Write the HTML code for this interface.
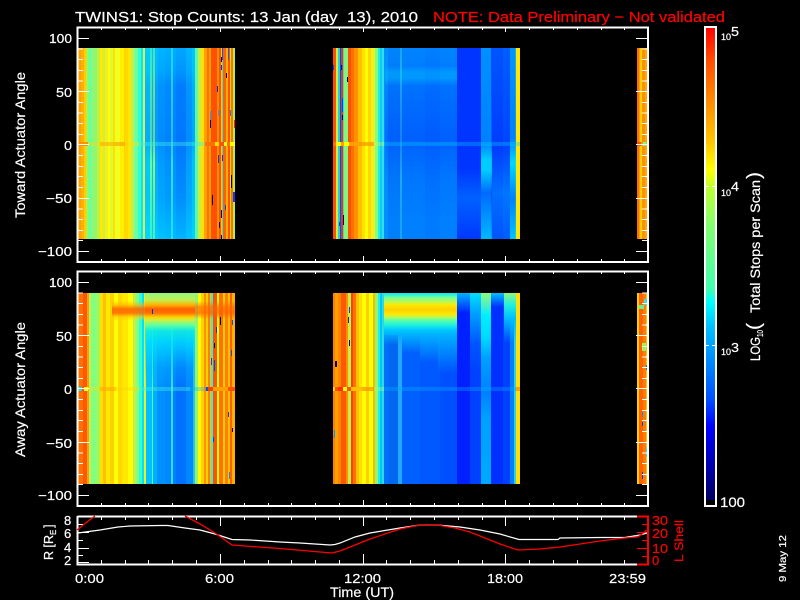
<!DOCTYPE html>
<html><head><meta charset="utf-8"><title>TWINS1 Stop Counts</title>
<style>
html,body{margin:0;padding:0;background:#000;width:800px;height:600px;overflow:hidden}
#w{position:relative;width:800px;height:600px;background:#000;overflow:hidden}
.a{position:absolute}
svg{position:absolute;left:0;top:0}
text{font-family:"Liberation Sans",sans-serif;fill:#fff;stroke:#fff;stroke-width:.2;white-space:pre}
.r{fill:#f00;stroke:#f00}
</style></head><body><div id="w">

<!-- Panel 1 -->
<div class="a" style="left:0;top:48px;width:800px;height:191px;background:linear-gradient(90deg,#000 0 78px,#ffa000 78px 81px,#ffb000 81px 84px,#ffd000 84px 86px,#b0f050 86px 88px,#70ff90 88px 92px,#90f870 92px 97px,#c0f040 97px 100px,#ffe800 100px 103px,#d0f040 103px 105px,#f0f020 105px 108px,#ffff00 108px 110px,#e0f830 110px 113px,#ffe000 113px 115px,#f0ff20 115px 120px,#ffee00 120px 124px,#ffd800 124px 128px,#ffe800 128px 131px,#c0f050 131px 134px,#70ffa0 134px 138px,#30ffd0 138px 141px,#10e0ff 141px 143px,#e0f040 143px 145px,#00c8ff 145px 150px,#60ffa0 150px 152px,#00c0f0 152px 153px,#90f870 153px 155px,#00b0ff 155px 158px,#009cff 158px 165px,#0090ff 165px 171px,#30e0f0 171px 173px,#0090ff 173px 176px,#0080ff 176px 186px,#00a0ff 186px 192px,#00c0ff 192px 195px,#60f8a0 195px 198px,#c0f050 198px 201px,#ffe000 201px 204px,#ffa000 204px 207px,#ff7000 207px 209px,#ffa000 209px 211px,#ff5000 211px 217px,#ff9000 217px 219px,#ff5000 219px 221px,#ffd000 221px 222px,#40e0c0 222px 223px,#ff6000 223px 226px,#ffb000 226px 228px,#ff5000 228px 230px,#ffe000 230px 231px,#ff7000 231px 233px,#b0f050 233px 235px,#000 235px 333px,#ff5000 333px 336px,#d0f040 336px 338px,#20d0e0 338px 340px,#0050ff 340px 341px,#ff3000 341px 343px,#30e0d0 343px 344px,#80f880 344px 348px,#ff5000 348px 351px,#ff7000 351px 354px,#ff9000 354px 358px,#ffc000 358px 362px,#ffe000 362px 365px,#ffff00 365px 368px,#ffd800 368px 371px,#f0f020 371px 375px,#80ff80 375px 378px,#20f0e0 378px 380px,#10c8ff 380px 382px,#30e0e0 382px 384px,#0090ff 384px 388px,#0078f8 388px 400px,#20b0ff 400px 402px,#0078ff 402px 425px,#0070ff 425px 440px,#0078ff 440px 457px,#0040ff 457px 481px,#0090ff 481px 491px,#0050ff 491px 503px,#0060ff 503px 510px,#00a8ff 510px 515px,#30d0d0 515px 516px,#ffe800 516px 520px,#000 520px 637px,#ff7000 637px 639px,#ffa000 639px 640px,#ffd000 640px 642px,#ff9000 642px 645px,#ffa800 645px 648px,#000 648px)"></div>

<!-- Panel 1 shading -->
<div class="a" style="left:145px;top:48px;width:50px;height:191px;background:linear-gradient(180deg,rgba(0,205,255,.5) 0,rgba(0,190,255,.35) 22px,rgba(0,110,255,.2) 38px,rgba(0,90,255,.25) 90px,rgba(0,200,255,0) 115px,rgba(0,200,255,.2) 150px,rgba(0,230,255,.5) 190px)"></div>
<div class="a" style="left:385px;top:48px;width:72px;height:191px;background:linear-gradient(180deg,rgba(0,150,255,.4) 0,rgba(0,150,255,.2) 18px,rgba(0,190,255,.45) 24px,rgba(0,190,255,.45) 30px,rgba(0,90,255,.2) 38px,rgba(0,60,255,.4) 90px,rgba(0,100,255,.1) 130px,rgba(0,140,255,.35) 170px)"></div>
<div class="a" style="left:481px;top:48px;width:11px;height:191px;background:linear-gradient(180deg,rgba(0,150,255,0) 0,rgba(0,120,255,.6) 95px,rgba(0,220,255,.8) 112px,rgba(0,220,255,.8) 122px,rgba(0,80,255,.6) 145px,rgba(0,200,255,.7) 190px)"></div>
<div class="a" style="left:510px;top:48px;width:6px;height:191px;background:linear-gradient(180deg,rgba(0,100,255,.3) 0,rgba(0,100,255,.6) 90px,rgba(0,230,255,.8) 115px,rgba(0,100,255,.6) 150px,rgba(0,210,255,.6) 190px)"></div>
<div class="a" style="left:492px;top:48px;width:18px;height:191px;background:linear-gradient(180deg,rgba(0,90,255,.5) 0,rgba(0,40,255,.5) 100px,rgba(0,140,255,.5) 145px,rgba(0,90,255,.5) 190px)"></div>
<div class="a" style="left:457px;top:48px;width:24px;height:191px;background:linear-gradient(180deg,rgba(0,40,255,.5) 0,rgba(0,40,255,.5) 120px,rgba(0,130,255,.5) 150px,rgba(0,50,255,.5) 190px)"></div>
<!-- Panel 1 zero band -->
<div class="a" style="left:0;top:142px;width:800px;height:4px;background:linear-gradient(90deg,transparent 78px,#ff9000 78px 88px,rgba(255,220,0,.35) 88px 100px,rgba(255,170,0,.6) 100px 115px,rgba(255,140,0,.55) 115px 125px,rgba(255,220,0,.35) 125px 140px,rgba(60,240,220,.4) 140px 205px,#ff7000 205px 215px,#ffe000 215px 219px,#ff5000 219px 224px,#ffff00 224px 227px,#ff7000 227px 230px,#ffff00 230px 235px,transparent 235px 333px,#ff7000 333px 336px,#ffff00 336px 341px,#ffa000 341px 344px,#ffff00 344px 349px,#ffa000 349px 362px,rgba(255,144,0,.7) 362px 374px,rgba(200,255,80,.4) 374px 384px,rgba(0,200,255,.35) 384px 520px,transparent 520px 637px,#ff5000 637px 641px,#ff9000 641px 643px,#70ffa0 643px 646px,transparent 646px)"></div>

<!-- Panel 2 -->
<div class="a" style="left:0;top:293px;width:800px;height:191px;background:linear-gradient(90deg,#000 0 78px,#ff7000 78px 83px,#ff5800 83px 87px,#ffa000 87px 89px,#c0f050 89px 91px,#80ff80 91px 96px,#a0f860 96px 100px,#ffe000 100px 103px,#ffc000 103px 106px,#ffe800 106px 110px,#ffd000 110px 114px,#ffff00 114px 118px,#ffd800 118px 122px,#ffe800 122px 128px,#ffff00 128px 133px,#c0f050 133px 136px,#80ff80 136px 139px,#30ffd0 139px 142px,#00e0ff 142px 144px,#f0f020 144px 146px,#00c0ff 146px 152px,#50f8b0 152px 153px,#00b0ff 153px 157px,#0090ff 157px 165px,#0088ff 165px 171px,#30e0f0 171px 173px,#0080ff 173px 176px,#0070ff 176px 186px,#0088ff 186px 193px,#30c0e0 193px 195px,#90f870 195px 198px,#ffff00 198px 201px,#ffd000 201px 204px,#ff9000 204px 206px,#ffd000 206px 208px,#ff8000 208px 210px,#ffc000 210px 211px,#30f0e0 211px 213px,#ff5000 213px 217px,#ffff00 217px 219px,#ff7000 219px 223px,#ffd000 223px 225px,#ff8000 225px 228px,#ffc000 228px 230px,#ff6000 230px 232px,#ffb000 232px 235px,#000 235px 333px,#ff8000 333px 335px,#ffa000 335px 338px,#ff8800 338px 341px,#ff5800 341px 346px,#ff9000 346px 348px,#c0f050 348px 351px,#ff4000 351px 353px,#ff7000 353px 356px,#ffc000 356px 359px,#ffe000 359px 362px,#ffff00 362px 366px,#ffd000 366px 369px,#ffff00 369px 373px,#ffb800 373px 375px,#90f870 375px 378px,#20f0e0 378px 380px,#00c8ff 380px 382px,#30d8e0 382px 384px,#0070f8 384px 388px,#0068f0 388px 398px,#20a8ff 398px 402px,#0060ff 402px 420px,#0058ff 420px 440px,#0050ff 440px 457px,#0020ff 457px 470px,#0040ff 470px 481px,#0090ff 481px 491px,#0030ff 491px 503px,#0040ff 503px 510px,#0080ff 510px 514px,#30d0e0 514px 516px,#ffe000 516px 520px,#000 520px 637px,#ffd000 637px 639px,#ff6000 639px 643px,#ff8000 643px 646px,#ffc000 646px 648px,#000 648px)"></div>

<!-- Panel 2 band: yellow columns left of the blue -->
<div class="a" style="left:112px;top:293px;width:33px;height:30px;background:linear-gradient(180deg,transparent 0,transparent 8px,rgba(255,170,0,.6) 12px,rgba(255,100,0,.9) 16px,rgba(255,110,0,.9) 20px,rgba(255,200,0,.6) 24px,transparent 28px)"></div>
<!-- Panel 2 band: over blue columns -->
<div class="a" style="left:145px;top:293px;width:50px;height:96px;background:linear-gradient(180deg,#90f880 0,#c0f050 7px,#ffb000 12px,#ff6000 16px,#ff7000 20px,#ffd000 24px,#d0f040 27px,#60ffa0 32px,rgba(16,240,224,.9) 38px,rgba(0,224,255,.8) 50px,rgba(0,190,255,.3) 75px,rgba(0,170,255,0) 96px)"></div>
<div class="a" style="left:195px;top:293px;width:40px;height:30px;background:linear-gradient(180deg,transparent 0,transparent 8px,rgba(255,100,0,.7) 14px,rgba(255,90,0,.7) 20px,transparent 26px)"></div>

<!-- Panel 2 band seg 2 -->
<div class="a" style="left:384px;top:293px;width:73px;height:42px;background:linear-gradient(180deg,#00e8ff 0,#80ff90 5px,#c0f850 9px,#ffe800 12px,#ffd000 17px,#ffe800 21px,#c0f850 24px,#60ffa0 27px,#20f0e0 32px,#00c8ff 37px,#00b0ff 42px)"></div>
<div class="a" style="left:384px;top:335px;width:18px;height:10px;background:linear-gradient(180deg,rgba(0,176,255,.8) 0,rgba(0,150,255,0) 100%)"></div>
<div class="a" style="left:402px;top:335px;width:18px;height:18px;background:linear-gradient(180deg,#00b0ff 0,rgba(0,150,255,0) 100%)"></div>
<div class="a" style="left:420px;top:335px;width:18px;height:28px;background:linear-gradient(180deg,#00b0ff 0,rgba(0,150,255,0) 100%)"></div>
<div class="a" style="left:438px;top:335px;width:19px;height:38px;background:linear-gradient(180deg,#00b0ff 0,rgba(0,150,255,0) 100%)"></div>
<!-- Columns right of 457 -->
<div class="a" style="left:470px;top:293px;width:11px;height:80px;background:linear-gradient(180deg,#00e0ff 0,#00a0ff 20px,rgba(0,100,255,.6) 50px,rgba(0,64,255,0) 80px)"></div>
<div class="a" style="left:457px;top:293px;width:13px;height:20px;background:linear-gradient(180deg,#00b0ff 0,rgba(0,60,255,0) 100%)"></div>
<div class="a" style="left:481px;top:293px;width:10px;height:191px;background:linear-gradient(180deg,#90f880 0,#50f0c0 12px,#00f0ff 22px,#00d8ff 45px,#00a0ff 65px,#0080ff 100px,#00a0ff 125px,#00a8ff 190px)"></div>
<div class="a" style="left:491px;top:293px;width:13px;height:14px;background:linear-gradient(180deg,#00c0ff 0,rgba(0,60,255,0) 100%)"></div>
<div class="a" style="left:504px;top:293px;width:12px;height:50px;background:linear-gradient(180deg,#90f880 0,#20f0e0 12px,#00c0ff 25px,rgba(0,120,255,0) 50px)"></div>
<!-- Panel 2 zero band -->
<div class="a" style="left:0;top:387px;width:800px;height:4px;background:linear-gradient(90deg,transparent 78px,#20e0e0 78px 82px,#ff5000 82px 84px,#ffff00 84px 88px,rgba(255,220,0,.35) 88px 100px,rgba(255,170,0,.6) 100px 116px,rgba(255,210,0,.35) 116px 140px,rgba(60,240,220,.4) 140px 190px,rgba(0,180,255,.35) 190px 205px,#ff7000 205px 206px,#0050ff 206px 208px,#ff4000 208px 213px,#ffa000 213px 228px,#ff5000 228px 235px,transparent 235px 333px,#ffd000 333px 335px,#ff5000 335px 338px,#ff3000 338px 343px,#ffff00 343px 347px,#ff5000 347px 351px,#ffc000 351px 362px,rgba(255,144,0,.7) 362px 374px,rgba(160,255,120,.4) 374px 384px,rgba(0,170,255,.35) 384px 516px,#ffa000 516px 520px,transparent 520px)"></div>

<!-- Colour bar -->
<div class="a" style="left:705px;top:27px;width:11px;height:479px;background:linear-gradient(180deg,#f00 0,#ff5000 35px,#ff8c00 75px,#ffc000 112px,#ff0 143px,#c0ff30 159px,#80ff70 200px,#40ffb0 262px,#0ff 275px,#00c0ff 300px,#0098ff 325px,#0050ff 372px,#00f 400px,#0000c0 430px,#000060 473px,#000 473px)"></div>

<svg width="800" height="600" viewBox="0 0 800 600">
<defs>
<path id="yt" d="M77 38.500h12M77 49h6M77 59.500h6M77 70.500h6M77 81h6M77 91.500h12M77 102.500h6M77 113h6M77 123.500h6M77 134.500h6M77 144.500h12M77 155.500h6M77 166.500h6M77 176.500h6M77 187.500h6M77 198.500h12M77 209h6M77 219.500h6M77 230.500h6M77 240.500h6M77 251.500h12" stroke="#fff" fill="none"/>
</defs>
<g shape-rendering="crispEdges">
<!-- noise panel 1 -->
<g>
<rect x="222" y="48" width="1" height="12" fill="#0060ff"/><rect x="228" y="48" width="1" height="12" fill="#0060ff"/><rect x="221" y="57" width="1" height="5" fill="#000080"/><rect x="221" y="65" width="1" height="5" fill="#0030ff"/><rect x="226" y="73" width="1" height="5" fill="#000030"/><rect x="217" y="86" width="1" height="6" fill="#0030d0"/>
<rect x="210" y="111" width="1" height="14" fill="#20a0ff"/><rect x="210" y="120" width="1" height="8" fill="#000040"/><rect x="218" y="110" width="1" height="6" fill="#20a0ff"/><rect x="230" y="110" width="1" height="6" fill="#0090ff"/><rect x="234" y="120" width="1" height="8" fill="#ff2000"/>
<rect x="218" y="155" width="1" height="8" fill="#0040f0"/><rect x="222" y="155" width="1" height="6" fill="#0040f0"/><rect x="231" y="175" width="1" height="13" fill="#000040"/><rect x="233" y="192" width="2" height="10" fill="#0040ff"/><rect x="212" y="195" width="1" height="10" fill="#000040"/><rect x="221" y="210" width="1" height="8" fill="#000060"/><rect x="225" y="205" width="1" height="5" fill="#0040ff"/><rect x="219" y="222" width="1" height="6" fill="#000060"/><rect x="221" y="235" width="1" height="4" fill="#000060"/>
<rect x="341" y="65" width="1" height="5" fill="#000080"/><rect x="333" y="65" width="1" height="5" fill="#0040ff"/><rect x="347" y="77" width="1" height="5" fill="#000030"/><rect x="342" y="98" width="1" height="14" fill="#0040ff"/><rect x="342" y="115" width="1" height="5" fill="#000030"/><rect x="343" y="215" width="1" height="10" fill="#000080"/><rect x="339" y="222" width="1" height="4" fill="#0040ff"/>
<!-- panel 2 noise -->
<rect x="211" y="358" width="1" height="7" fill="#0040ff"/><rect x="214" y="360" width="1" height="9" fill="#0040d0"/><rect x="220" y="317" width="1" height="8" fill="#000040"/><rect x="216" y="327" width="1" height="6" fill="#0030ff"/><rect x="214" y="343" width="1" height="5" fill="#000040"/><rect x="214" y="360" width="1" height="11" fill="#0040ff"/><rect x="152" y="309" width="1" height="5" fill="#0030ff"/><rect x="231" y="350" width="1" height="6" fill="#0050ff"/><rect x="232" y="320" width="1" height="5" fill="#0050ff"/><rect x="228" y="412" width="1" height="5" fill="#0040ff"/><rect x="232" y="428" width="1" height="4" fill="#000080"/><rect x="213" y="437" width="1" height="5" fill="#0040ff"/><rect x="229" y="472" width="1" height="7" fill="#0090ff"/>
<rect x="349" y="307" width="1" height="6" fill="#0040ff"/><rect x="348" y="317" width="1" height="6" fill="#0030c0"/><rect x="349" y="340" width="1" height="6" fill="#000080"/><rect x="335" y="361" width="2" height="6" fill="#000040"/><rect x="334" y="430" width="1" height="8" fill="#0090ff"/>
<rect x="644" y="299" width="3" height="6" fill="#40e0d0"/><rect x="639" y="305" width="5" height="4" fill="#60f0a0"/><rect x="642" y="343" width="4" height="8" fill="#a0f060"/><rect x="646" y="365" width="1" height="5" fill="#0080ff"/><rect x="642" y="412" width="1" height="5" fill="#2080ff"/><rect x="642" y="422" width="1" height="4" fill="#0040ff"/><rect x="642" y="472" width="1" height="7" fill="#0040ff"/><rect x="646" y="447" width="1" height="10" fill="#40e0d0"/>
</g>

<!-- Axes -->
<path d="M77.500 27.500H648V262H77.500Z M77.500 271.500H648V506H77.500Z" fill="none" stroke="#fff" stroke-width="2"/>
<path d="M77.500 516.500H637 M77.500 516V564.500H637" fill="none" stroke="#fff" stroke-width="2"/>
<path d="M637 516.500H648V564.500H637 M648 516V565" fill="none" stroke="#f00" stroke-width="2"/>
<use href="#yt"/>
<use href="#yt" transform="translate(725 0) scale(-1 1)"/>
<use href="#yt" transform="translate(0 244)"/>
<use href="#yt" transform="translate(725 244) scale(-1 1)"/>
<!-- X ticks -->
<path stroke="#fff" fill="none" d="M101.500 28v2M125.500 28v2M148.500 28v2M172.500 28v2M196.500 28v2M220.500 28v4M244.500 28v2M268.500 28v2M291.500 28v2M315.500 28v2M339.500 28v2M363.500 28v4M386.500 28v2M410.500 28v2M434.500 28v2M458.500 28v2M482.500 28v2M505.500 28v4M529.500 28v2M553.500 28v2M577.500 28v2M601.500 28v2M624.500 28v2"/>
<path stroke="#fff" fill="none" d="M101.500 262v-3M125.500 262v-3M148.500 262v-3M172.500 262v-3M196.500 262v-3M220.500 262v-6M244.500 262v-3M268.500 262v-3M291.500 262v-3M315.500 262v-3M339.500 262v-3M363.500 262v-6M386.500 262v-3M410.500 262v-3M434.500 262v-3M458.500 262v-3M482.500 262v-3M505.500 262v-6M529.500 262v-3M553.500 262v-3M577.500 262v-3M601.500 262v-3M624.500 262v-3"/>
<path stroke="#fff" fill="none" d="M101.500 272v2M125.500 272v2M148.500 272v2M172.500 272v2M196.500 272v2M220.500 272v4M244.500 272v2M268.500 272v2M291.500 272v2M315.500 272v2M339.500 272v2M363.500 272v4M386.500 272v2M410.500 272v2M434.500 272v2M458.500 272v2M482.500 272v2M505.500 272v4M529.500 272v2M553.500 272v2M577.500 272v2M601.500 272v2M624.500 272v2"/>
<path stroke="#fff" fill="none" d="M101.500 506v-3M125.500 506v-3M148.500 506v-3M172.500 506v-3M196.500 506v-3M220.500 506v-6M244.500 506v-3M268.500 506v-3M291.500 506v-3M315.500 506v-3M339.500 506v-3M363.500 506v-6M386.500 506v-3M410.500 506v-3M434.500 506v-3M458.500 506v-3M482.500 506v-3M505.500 506v-6M529.500 506v-3M553.500 506v-3M577.500 506v-3M601.500 506v-3M624.500 506v-3"/>
<path stroke="#fff" fill="none" d="M101.500 517v3M125.500 517v3M148.500 517v3M172.500 517v3M196.500 517v3M220.500 517v9M244.500 517v3M268.500 517v3M291.500 517v3M315.500 517v3M339.500 517v3M363.500 517v9M386.500 517v3M410.500 517v3M434.500 517v3M458.500 517v3M482.500 517v3M505.500 517v9M529.500 517v3M553.500 517v3M577.500 517v3M601.500 517v3M624.500 517v3"/>
<path stroke="#fff" fill="none" d="M101.500 564v-4M125.500 564v-4M148.500 564v-4M172.500 564v-4M196.500 564v-4M220.500 564v-10M244.500 564v-4M268.500 564v-4M291.500 564v-4M315.500 564v-4M339.500 564v-4M363.500 564v-10M386.500 564v-4M410.500 564v-4M434.500 564v-4M458.500 564v-4M482.500 564v-4M505.500 564v-10M529.500 564v-4M553.500 564v-4M577.500 564v-4M601.500 564v-4M624.500 564v-4"/>
<!-- Panel 3 y ticks -->
<path stroke="#fff" fill="none" d="M77 524.500h6M77 532.500h12M77 540.500h6M77 548.500h12M77 555.500h6M77 562.500h12"/>
<path stroke="#f00" fill="none" d="M648 524.500h-6M648 532.500h-11M648 540.500h-6M648 548.500h-11M648 556.500h-6"/>
<!-- Colour bar frame -->
<rect x="705" y="27" width="11" height="479" fill="none" stroke="#fff" stroke-width="2"/>
<path stroke="#fff" fill="none" d="M705 186.500h4M712 186.500h4M705 345.500h4M712 345.500h4"/>
</g>

<!-- Curves -->
<path fill="none" stroke="#fff" stroke-width="1.200" d="M78 533L100 530L118 527L130 526L160 525.500L168 525.500L185 528L200 530L215 534L232 539.500L250 540L280 542L300 543L330 545L335 544.500L340 543L355 537L370 533L400 528L420 525L437 525L460 527L480 530L500 534L519 539.500L558 539.500L560 538L600 537.500L625 537.500L640 535L647 533"/>
<path fill="none" stroke="#f00" stroke-width="1.300" d="M77 530L87 522L95 516M185 516L200 524L215 533L232 545L245 546L280 548.500L320 552L332 553L340 551L370 539L400 529L420 525L437 525L455 528L470 532L500 544L518 550L540 549L560 547L600 541L625 538L638 537L642 534L647 530"/>

<!-- Titles -->
<text x="75" y="22" font-size="15" textLength="343" lengthAdjust="spacingAndGlyphs">TWINS1: Stop Counts: 13 Jan (day  13), 2010</text>
<text class="r" x="433" y="22" font-size="15" textLength="292" lengthAdjust="spacingAndGlyphs">NOTE: Data Preliminary − Not validated</text>

<!-- Y labels -->
<g font-size="13" text-anchor="start">
<text x="49" y="43" textLength="23" lengthAdjust="spacingAndGlyphs">100</text>
<text x="56" y="97" textLength="16" lengthAdjust="spacingAndGlyphs">50</text>
<text x="64" y="150" textLength="8" lengthAdjust="spacingAndGlyphs">0</text>
<text x="46" y="203" textLength="26" lengthAdjust="spacingAndGlyphs">−50</text>
<text x="38" y="256" textLength="34" lengthAdjust="spacingAndGlyphs">−100</text>
<text x="49" y="287" textLength="23" lengthAdjust="spacingAndGlyphs">100</text>
<text x="56" y="341" textLength="16" lengthAdjust="spacingAndGlyphs">50</text>
<text x="64" y="394" textLength="8" lengthAdjust="spacingAndGlyphs">0</text>
<text x="46" y="448" textLength="26" lengthAdjust="spacingAndGlyphs">−50</text>
<text x="38" y="500" textLength="34" lengthAdjust="spacingAndGlyphs">−100</text>
<text x="64" y="525">8</text>
<text x="64" y="538">6</text>
<text x="64" y="552">4</text>
<text x="64" y="565">2</text>
</g>
<g font-size="13">
<text class="r" x="652" y="525" textLength="16" lengthAdjust="spacingAndGlyphs">30</text>
<text class="r" x="652" y="538" textLength="16" lengthAdjust="spacingAndGlyphs">20</text>
<text class="r" x="652" y="553" textLength="16" lengthAdjust="spacingAndGlyphs">10</text>
<text class="r" x="652" y="565">0</text>
<text x="75" y="583" textLength="29" lengthAdjust="spacingAndGlyphs">0:00</text>
<text x="205" y="583" textLength="29" lengthAdjust="spacingAndGlyphs">6:00</text>
<text x="344" y="583" textLength="37" lengthAdjust="spacingAndGlyphs">12:00</text>
<text x="487" y="583" textLength="36" lengthAdjust="spacingAndGlyphs">18:00</text>
<text x="609" y="583" textLength="37" lengthAdjust="spacingAndGlyphs">23:59</text>
</g>
<text x="330" y="597" font-size="14" textLength="64" lengthAdjust="spacingAndGlyphs">Time (UT)</text>

<!-- Rotated labels -->
<text transform="translate(25 218) rotate(-90)" font-size="14" textLength="146" lengthAdjust="spacingAndGlyphs">Toward Actuator Angle</text>
<text transform="translate(25 457) rotate(-90)" font-size="14" textLength="135" lengthAdjust="spacingAndGlyphs">Away Actuator Angle</text>
<text transform="translate(53 560) rotate(-90)" font-size="13" textLength="25" lengthAdjust="spacingAndGlyphs">R [R</text>
<text transform="translate(56 535) rotate(-90)" font-size="8">E</text>
<text transform="translate(53 528) rotate(-90)" font-size="13">]</text>
<text class="r" transform="translate(683 562) rotate(-90)" font-size="12" textLength="42" lengthAdjust="spacingAndGlyphs">L Shell</text>
<text transform="translate(786 582) rotate(-90)" font-size="10" textLength="47" lengthAdjust="spacingAndGlyphs">9 May 12</text>

<text transform="translate(760 361) rotate(-90)" font-size="14" textLength="24" lengthAdjust="spacingAndGlyphs">LOG</text>
<text transform="translate(763 337) rotate(-90)" font-size="8" textLength="7" lengthAdjust="spacingAndGlyphs">10</text>
<text transform="translate(760 330) rotate(-90)" font-size="19" textLength="7" lengthAdjust="spacingAndGlyphs">(</text>
<text transform="translate(760 313) rotate(-90)" font-size="14" textLength="133" lengthAdjust="spacingAndGlyphs">Total Stops per Scan</text>
<text transform="translate(760 179) rotate(-90)" font-size="19" textLength="7" lengthAdjust="spacingAndGlyphs">)</text>

<!-- Colour bar labels -->
<text x="721" y="40" font-size="9" textLength="10" lengthAdjust="spacingAndGlyphs">10</text>
<text x="731" y="36" font-size="13" textLength="8" lengthAdjust="spacingAndGlyphs">5</text>
<text x="721" y="196" font-size="9" textLength="10" lengthAdjust="spacingAndGlyphs">10</text>
<text x="731" y="191" font-size="13" textLength="8" lengthAdjust="spacingAndGlyphs">4</text>
<text x="721" y="355" font-size="9" textLength="10" lengthAdjust="spacingAndGlyphs">10</text>
<text x="731" y="352" font-size="13" textLength="8" lengthAdjust="spacingAndGlyphs">3</text>
<text x="720" y="507" font-size="14" textLength="25" lengthAdjust="spacingAndGlyphs">100</text>
</svg>
</div></body></html>
